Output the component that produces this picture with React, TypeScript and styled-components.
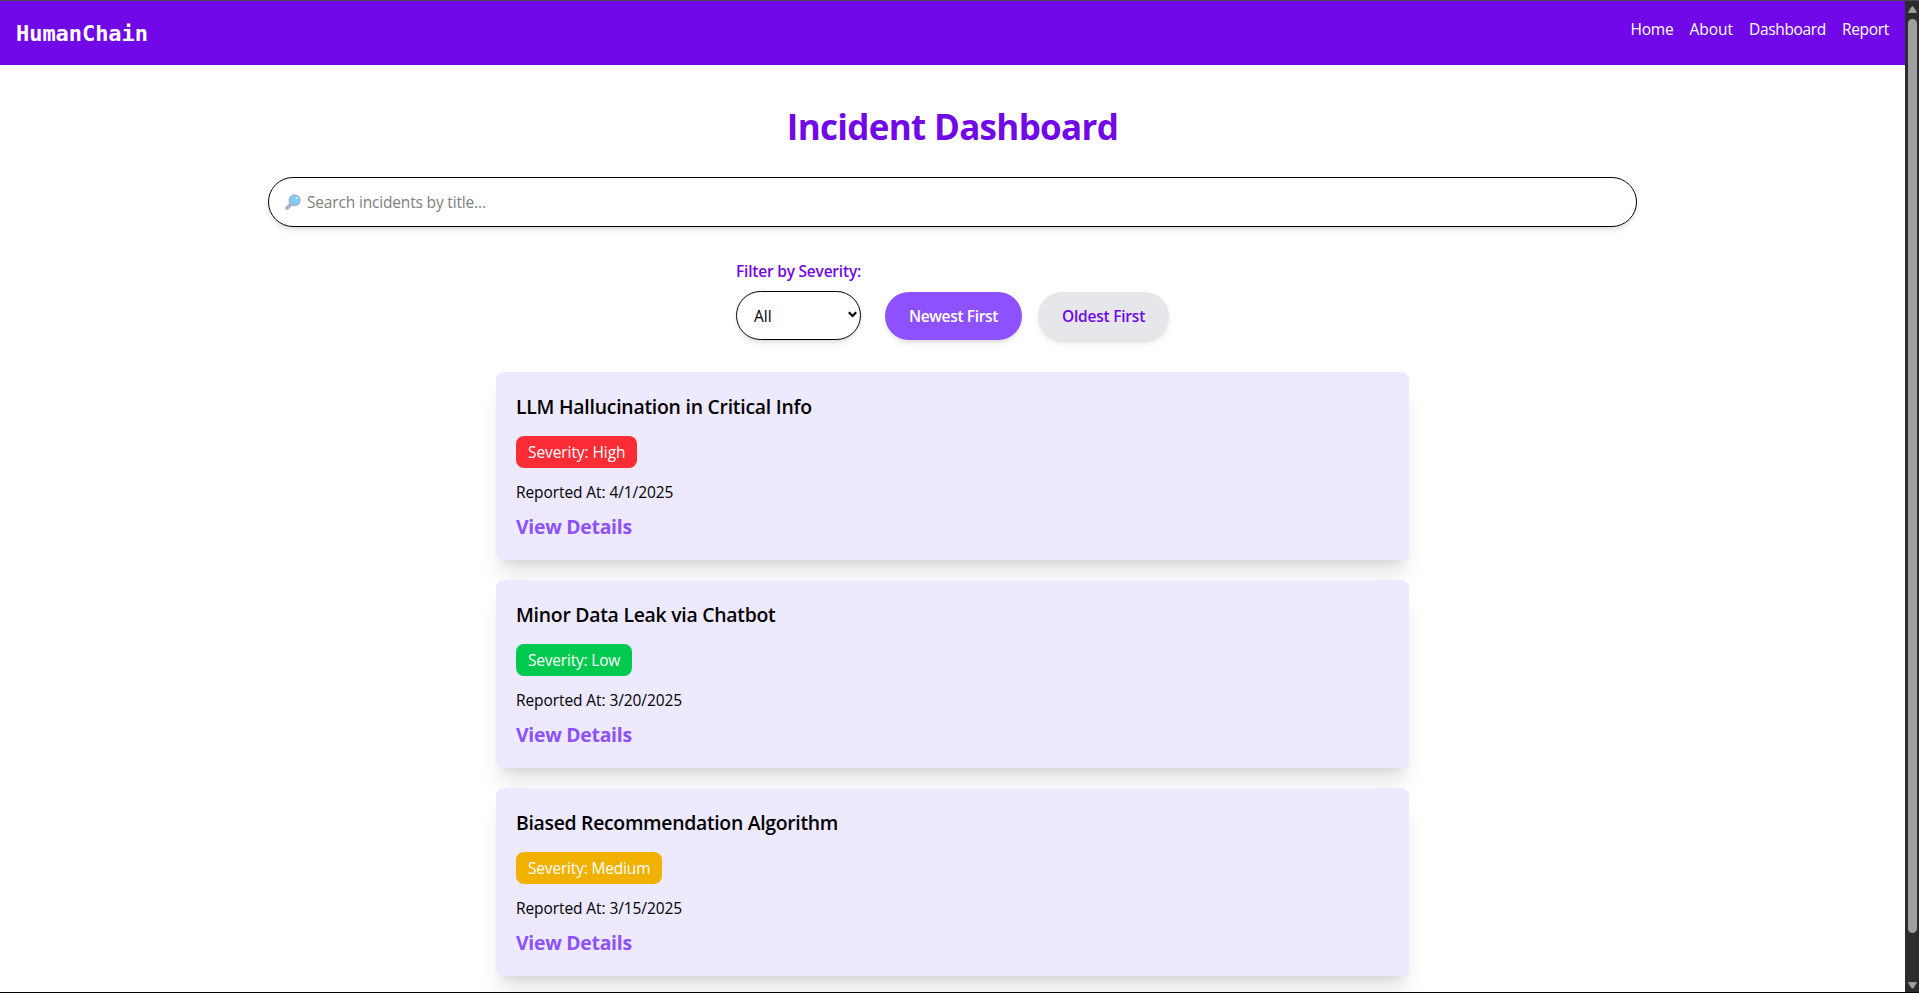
import React from 'react';
import styled, { createGlobalStyle } from 'styled-components';

const GlobalStyle = createGlobalStyle`
  *, *::before, *::after { box-sizing: border-box; }
  body {
    margin: 0;
    background: #fff;
    color: #000;
    font: 15.5px/24px "Open Sans", "Noto Sans", sans-serif;
    overflow: hidden;
  }
  h1, h2, p { margin: 0; }
`;

const Window = styled.div`
  height: 993px;
  display: flex;
  flex-direction: column;
  border-top: 1px solid #484a52;
  border-bottom: 1px solid #000;
`;
const Viewport = styled.div`
  flex: 1;
  min-height: 0;
  display: flex;
`;
const Page = styled.div`
  flex: 1;
  min-width: 0;
  overflow: hidden;
`;

const Navbar = styled.nav`
  height: 64px;
  padding: 16px;
  display: flex;
  justify-content: space-between;
  align-items: flex-start;
  background: #7008e7;
  color: #fff;
`;
const Logo = styled.div`
  font: bold 22px/34px "DejaVu Sans Mono", monospace;
  letter-spacing: -0.05px;
`;
const NavLinks = styled.div`
  display: flex;
  gap: 16px;
`;
const NavLink = styled.a<{ $track: number }>`
  letter-spacing: ${(p) => p.$track}px;
`;

const Main = styled.main`
  display: flex;
  flex-direction: column;
  align-items: center;
  padding-top: 40px;
`;
const Title = styled.h1`
  font-size: 35px;
  line-height: 44px;
  font-weight: 700;
  letter-spacing: -0.69px;
  color: #7008e7;
`;
const SearchBox = styled.label`
  width: 1369px;
  height: 50px;
  margin-top: 28px;
  padding: 0 16px;
  display: flex;
  align-items: center;
  gap: 6px;
  border: 1px solid #000;
  border-radius: 25px;
  box-shadow: 0 4px 6px -1px rgba(0, 0, 0, 0.1), 0 2px 4px -2px rgba(0, 0, 0, 0.1);
`;
const SearchInput = styled.input`
  flex: 1;
  height: 24px;
  padding: 0;
  border: 0;
  outline: 0;
  background: transparent;
  font: inherit;
  letter-spacing: -0.17px;
  &::placeholder { color: #808080; opacity: 1; }
`;

const Controls = styled.div`
  display: flex;
  align-items: flex-end;
  margin-top: 32px;
`;
const Filter = styled.div`
  width: 125px;
  margin-right: 24px;
  display: flex;
  flex-direction: column;
  gap: 8px;
`;
const FilterLabel = styled.label`
  font-weight: 600;
  letter-spacing: -0.21px;
  color: #7008e7;
  white-space: nowrap;
`;
const SelectBox = styled.div`
  height: 49px;
  padding: 0 3px 0 17px;
  display: flex;
  align-items: center;
  border: 1px solid #000;
  border-radius: 25px;
  box-shadow: 0 4px 6px -1px rgba(0, 0, 0, 0.1), 0 2px 4px -2px rgba(0, 0, 0, 0.1);
`;
const Select = styled.select`
  flex: 1;
  min-width: 0;
  padding: 0;
  border: 0;
  appearance: none;
  background: transparent;
  color: #000;
  font: inherit;
`;
const SelectArrow = styled.svg`
  margin-bottom: 2px;
`;
const SortButton = styled.button<{ $active?: boolean }>`
  width: ${(p) => (p.$active ? 137 : 131)}px;
  height: 48px;
  padding: 0;
  border: 0;
  border-radius: 24px;
  margin-right: ${(p) => (p.$active ? 16 : 0)}px;
  background: ${(p) => (p.$active ? '#8e51ff' : '#e5e7eb')};
  color: ${(p) => (p.$active ? '#fff' : '#7008e7')};
  font: 600 15.5px/24px "Open Sans", sans-serif;
  letter-spacing: ${(p) => (p.$active ? -0.34 : -0.22)}px;
  box-shadow: 0 4px 6px -1px rgba(0, 0, 0, 0.1), 0 2px 4px -2px rgba(0, 0, 0, 0.1);
`;

const CardList = styled.div`
  width: 913px;
  margin-top: 32px;
  display: flex;
  flex-direction: column;
  gap: 20px;
`;
const Card = styled.article`
  height: 188px;
  padding: 21px 20px 19px;
  display: flex;
  flex-direction: column;
  align-items: flex-start;
  border-radius: 8px;
  background: #ede9fe;
  box-shadow: 0 20px 25px -5px rgba(0, 0, 0, 0.1), 0 8px 10px -6px rgba(0, 0, 0, 0.1);
`;
const CardTitle = styled.h2<{ $track: number }>`
  font-size: 19.4px;
  line-height: 28px;
  font-weight: 600;
  letter-spacing: ${(p) => p.$track}px;
`;
const Badge = styled.span<{ $color: string; $width: number; $track: number }>`
  width: ${(p) => p.$width}px;
  height: 32px;
  margin-top: 15px;
  padding: 4px 12px;
  border-radius: 8px;
  background: ${(p) => p.$color};
  color: #fff;
  letter-spacing: ${(p) => p.$track}px;
  white-space: nowrap;
`;
const Reported = styled.p`
  margin-top: 12px;
  letter-spacing: -0.09px;
`;
const Details = styled.a`
  margin-top: 9px;
  font-size: 19.4px;
  line-height: 28px;
  font-weight: 700;
  letter-spacing: -0.27px;
  color: #8e51ff;
`;

const ScrollTrack = styled.div`
  width: 14px;
  padding: 5px 0 3px;
  display: flex;
  flex-direction: column;
  align-items: center;
  background: #2c2c2c;
`;
const ScrollThumb = styled.div`
  width: 9px;
  height: 914px;
  margin: 6px 0 auto;
  border-radius: 5px;
  background: #9f9f9f;
`;

const navItems = [
  { label: 'Home', track: -0.22 },
  { label: 'About', track: 0 },
  { label: 'Dashboard', track: -0.34 },
  { label: 'Report', track: -0.32 },
];

const incidents = [
  { title: 'LLM Hallucination in Critical Info', track: -0.24, severity: 'High', color: '#fb2c36', width: 121, badgeTrack: -0.08, date: '4/1/2025' },
  { title: 'Minor Data Leak via Chatbot', track: -0.26, severity: 'Low', color: '#00c950', width: 116, badgeTrack: -0.2, date: '3/20/2025' },
  { title: 'Biased Recommendation Algorithm', track: -0.3, severity: 'Medium', color: '#f0b100', width: 146, badgeTrack: -0.18, date: '3/15/2025' },
];

const MagnifierIcon = () => (
  <svg width="16" height="16" viewBox="0 0 16 16">
    <path d="M2 14.1 6 10.3" stroke="#b4acd0" strokeWidth="3.6" strokeLinecap="round" />
    <circle cx="9.6" cy="6.2" r="5.4" fill="#7dcff8" stroke="#b0a9cf" strokeWidth="1.3" />
    <circle cx="11.8" cy="4" r="1" fill="#e9f8ff" />
  </svg>
);
const ChevronIcon = () => (
  <SelectArrow width="9" height="7" viewBox="0 0 9 7">
    <path d="M0.8 1.2 4.5 5 8.2 1.2" fill="none" stroke="#000" strokeWidth="2" />
  </SelectArrow>
);
const ScrollArrow = ({ down }: { down?: boolean }) => (
  <svg width="9" height="7" viewBox="0 0 9 7">
    <path
      d={down ? 'M0.5 0.5h8L5.6 5.6Q4.5 7 3.4 5.6Z' : 'M0.5 6.5h8L5.6 1.4Q4.5 0 3.4 1.4Z'}
      fill="#9f9f9f"
      stroke="#9f9f9f"
      strokeWidth="0.8"
      strokeLinejoin="round"
    />
  </svg>
);

export default function App() {
  return (
    <Window>
      <GlobalStyle />
      <Viewport>
        <Page>
          <Navbar>
            <Logo>HumanChain</Logo>
            <NavLinks>
              {navItems.map((item) => (
                <NavLink key={item.label} $track={item.track}>{item.label}</NavLink>
              ))}
            </NavLinks>
          </Navbar>
          <Main>
            <Title>Incident Dashboard</Title>
            <SearchBox>
              <MagnifierIcon />
              <SearchInput placeholder="Search incidents by title..." />
            </SearchBox>
            <Controls>
              <Filter>
                <FilterLabel htmlFor="severity">Filter by Severity:</FilterLabel>
                <SelectBox>
                  <Select id="severity" defaultValue="All">
                    <option>All</option>
                    <option>Low</option>
                    <option>Medium</option>
                    <option>High</option>
                  </Select>
                  <ChevronIcon />
                </SelectBox>
              </Filter>
              <SortButton $active>Newest First</SortButton>
              <SortButton>Oldest First</SortButton>
            </Controls>
            <CardList>
              {incidents.map((item) => (
                <Card key={item.title}>
                  <CardTitle $track={item.track}>{item.title}</CardTitle>
                  <Badge $color={item.color} $width={item.width} $track={item.badgeTrack}>
                    Severity: {item.severity}
                  </Badge>
                  <Reported>Reported At: {item.date}</Reported>
                  <Details>View Details</Details>
                </Card>
              ))}
            </CardList>
          </Main>
        </Page>
        <ScrollTrack>
          <ScrollArrow />
          <ScrollThumb />
          <ScrollArrow down />
        </ScrollTrack>
      </Viewport>
    </Window>
  );
}
